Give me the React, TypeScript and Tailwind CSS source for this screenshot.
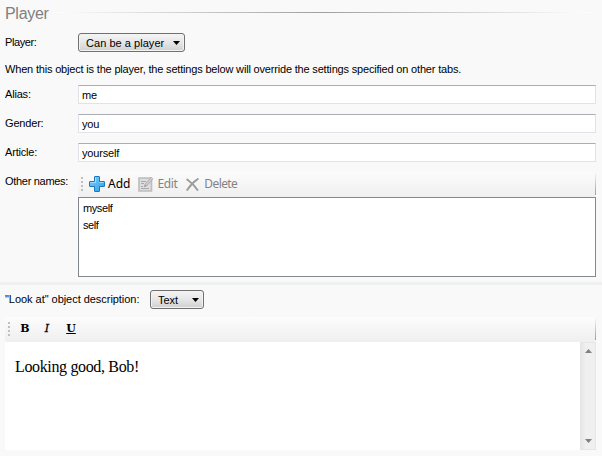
import React, { useState } from 'react';

interface SelectButtonProps {
  label: string;
  className: string;
}

const SelectButton: React.FC<SelectButtonProps> = ({ label, className }) => (
  <button className={`flex h-[19px] shrink-0 items-center justify-between rounded-[3px] border border-[#707070] bg-linear-to-b from-[#f2f2f2] from-10% via-[#e6e6e6] via-50% to-[#d0d0d0] pr-[4px] pl-[7px] shadow-[inset_0_0_0_1px_#f3f3f3] ${className}`}>
    <span className="pt-px leading-[17px] whitespace-nowrap">{label}</span>
    <svg width="7" height="4" viewBox="0 0 7 4"><path d="M0 0h7L3.5 4z" fill="#000" /></svg>
  </button>
);

const Grip = () => (
  <div className="flex w-[2px] shrink-0 flex-col gap-[2px]">
    {[0, 1, 2, 3].map((i) => <span key={i} className="h-[2px] w-[2px] bg-[#bfbfbf]" />)}
  </div>
);

interface ToolbarProps {
  className?: string;
  children: React.ReactNode;
}

const Toolbar: React.FC<ToolbarProps> = ({ className = '', children }) => (
  <div className={`flex h-[25px] justify-between rounded-[3px] bg-linear-to-b from-[#fcfcfc] to-[#efefef] ${className}`}>
    <div className="flex items-center pb-px">{children}</div>
    <div className="h-[23px] w-px bg-linear-to-b from-[#fafafa] to-[#9c9c9c]" />
  </div>
);

const AddIcon = () => (
  <svg width="16" height="16" viewBox="0 0 16 16">
    <defs>
      <linearGradient id="plus" x1="0" y1="0" x2="1" y2="1">
        <stop offset="0" stopColor="#7fd0fb" />
        <stop offset="1" stopColor="#2a9fe8" />
      </linearGradient>
    </defs>
    <path d="M6 .5h4q.5 0 .5.5v4.500H15q.5 0 .5.5v4q0 .5-.5.5h-4.500V15q0 .5-.5.5H6q-.5 0-.5-.5v-4.500H1q-.5 0-.5-.5V6q0-.5.5-.5h4.500V1q0-.5.5-.5z" fill="url(#plus)" stroke="#1c78ba" />
    <path d="M6.500 6.500V1.500M1.500 6.500h5M10.500 6.500h4" stroke="#a5defc" fill="none" />
  </svg>
);

const EditIcon = () => (
  <svg width="16" height="16" viewBox="0 0 16 16" fill="none">
    <path d="M1 2h12.500v13H1z" fill="#dedede" stroke="#bcbcbc" strokeWidth="1.600" />
    <path d="M3 5.500h5M3 7.500h3M3 12.500h8M3 10.500h2" stroke="#aaa" />
    <path d="M8 9 14 2" stroke="#b4b4b4" strokeWidth="3.200" />
    <path d="M8.300 8.700 13.700 2.400" stroke="#d2d2d2" strokeWidth="1.200" />
    <path d="M6 11.200l.7-3 2.300 1.900z" fill="#999" />
  </svg>
);

const DeleteIcon = () => (
  <svg width="13" height="13" viewBox="0 0 13 13" fill="none">
    <path d="M1.200 1.500C4 3.500 9 8 11.500 12M11.800 1C8 3.500 4 7.500 1.200 12" stroke="#9c9c9c" strokeWidth="1.900" strokeLinecap="round" />
  </svg>
);

interface FieldProps {
  label: string;
  value: string;
  onChange: (v: string) => void;
}

const Field: React.FC<FieldProps> = ({ label, value, onChange }) => (
  <div className="flex h-[29px]">
    <label className="w-[73px] shrink-0 pt-[3px] leading-[13px]">{label}</label>
    <input
      value={value}
      onChange={(e) => onChange(e.target.value)}
      className="h-[19px] flex-1 border border-[#e2e3ea] border-t-[#abadb3] bg-white pt-[2px] pb-px pl-[3px] leading-[14px] outline-none"
    />
  </div>
);

export default function App() {
  const [alias, setAlias] = useState('me');
  const [gender, setGender] = useState('you');
  const [article, setArticle] = useState('yourself');
  const otherNames = ['myself', 'self'];

  return (
    <div className="flex h-[456px] w-[602px] flex-col overflow-hidden bg-[#f9f9f9] font-['Liberation_Sans',Arial,sans-serif] text-[11px] tracking-[-0.18px] text-black">
      <section className="flex h-[282px] flex-col pr-[6px] pl-[5px]">
        <div className="flex h-[33px] items-start pr-[5px]">
          <h2 className="w-[48px] shrink-0 pt-[5px] text-[16px] leading-[18px] tracking-[-0.3px] text-[#808080]">Player</h2>
          <div className="mt-[12px] h-px flex-1 bg-linear-to-r from-white via-[#a0a0a0] to-white" />
        </div>
        <div className="flex h-[30px]">
          <span className="w-[73px] pt-[3px] leading-[13px] tracking-[-0.4px]">Player:</span>
          <SelectButton label="Can be a player" className="w-[107px] tracking-[0.04px]" />
        </div>
        <p className="h-[22px] leading-[13px] whitespace-nowrap">
          When this object is the player, the settings below will override the settings specified on other tabs.
        </p>
        <Field label="Alias:" value={alias} onChange={setAlias} />
        <Field label="Gender:" value={gender} onChange={setGender} />
        <Field label="Article:" value={article} onChange={setArticle} />
        <div className="flex">
          <span className="w-[73px] shrink-0 pt-[3px] leading-[13px] tracking-[-0.3px] whitespace-nowrap">Other names:</span>
          <div className="flex-1">
            <Toolbar className="pl-[3px] font-['Noto_Sans',sans-serif] text-[12px] tracking-[-0.2px] text-[#838383]">
              <Grip />
              <button className="ml-[6px] flex items-center gap-[3px] tracking-normal text-black"><AddIcon />Add</button>
              <button className="ml-[8px] flex items-center gap-[3px] tracking-[-0.4px]"><EditIcon />Edit</button>
              <button className="ml-[9px] flex items-center gap-[5px] tracking-[-0.6px]"><DeleteIcon />Delete</button>
            </Toolbar>
            <ul className="h-[80px] border border-[#828790] bg-white pt-[2px] pl-[4px] tracking-[-0.4px]">
              {otherNames.map((name) => <li key={name} className="h-[17px] leading-[17px]">{name}</li>)}
            </ul>
          </div>
        </div>
      </section>

      <div className="h-[3px] shrink-0 bg-[#f0f0f0]" />

      <section className="flex flex-col pt-[5px] pr-[6px] pl-[5px]">
        <div className="flex h-[27px]">
          <span className="w-[145px] pt-[3px] leading-[13px] tracking-[-0.04px] whitespace-nowrap">"Look at" object description:</span>
          <SelectButton label="Text" className="w-[54px] tracking-normal" />
        </div>
        <Toolbar className="pl-[3px] font-['DejaVu_Serif',serif] text-[11px] font-bold tracking-normal">
          <Grip />
          <button className="ml-[10px] w-[10px] text-center">B</button>
          <button className="ml-[12px] flex w-[10px] justify-center font-normal italic [-webkit-text-stroke:0.3px_black]">I</button>
          <button className="ml-[14px] flex w-[10px] justify-center underline">U</button>
        </Toolbar>
        <div className="flex h-[108px] bg-white">
          <div className="flex-1 pt-[16px] pl-[10px] font-['Liberation_Serif',serif] text-[16px] leading-[18px] tracking-[-0.35px]">Looking good, Bob!</div>
          <div className="flex w-[16px] flex-col items-center justify-between border border-[#e6e6e6] bg-linear-to-r from-[#e6e6e6] to-[#f0f0f0] to-35% py-[6px]">
            <svg width="7" height="4" viewBox="0 0 7 4"><path d="M3.500 0 7 4H0z" fill="#808080" /></svg>
            <svg width="7" height="4" viewBox="0 0 7 4"><path d="M0 0h7L3.500 4z" fill="#808080" /></svg>
          </div>
        </div>
      </section>
    </div>
  );
}
